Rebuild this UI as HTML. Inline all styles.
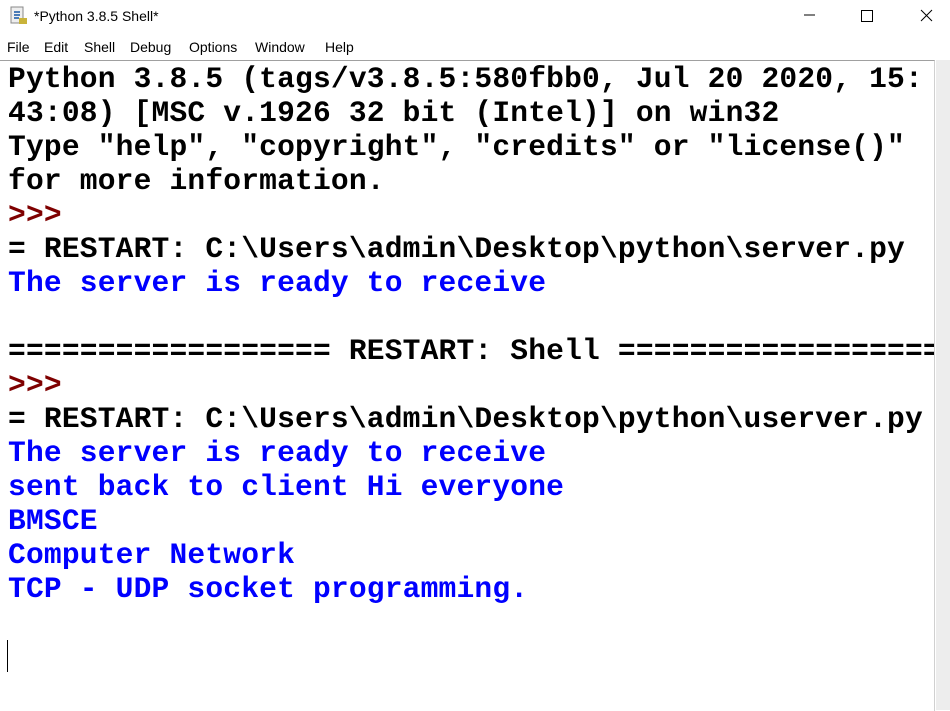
<!DOCTYPE html>
<html><head><style>
body{margin:0;width:950px;height:710px;background:#fff;overflow:hidden;position:relative;font-family:"Liberation Sans",sans-serif}
.title{position:absolute;left:34px;top:8px;font-size:14px;color:#000}
.menu span{position:absolute;top:39px;font-size:14px}
.ta{position:absolute;left:0;top:60px;width:934px;height:650px;border-top:1px solid #a0a0a0;border-right:1px solid #d0d0d0}
.sb{position:absolute;left:936px;top:60px;width:14px;height:650px;background:#ededed}
pre{position:absolute;left:8px;top:62px;margin:0;font-family:"Liberation Mono",monospace;font-weight:bold;font-size:29.6px;letter-spacing:0.18px;line-height:34px;color:#000;width:926px;overflow:hidden}
.b{color:#0000ff}.r{color:#7f0000}
.cur{position:absolute;left:7px;top:640px;width:1px;height:32px;background:#000}
</style></head><body>
<svg style="position:absolute;left:10px;top:6px" width="18" height="20"><rect x="1" y="1" width="12" height="16" fill="#eee" stroke="#888"/><path d="M4 6h6M4 9h6M4 12h5" stroke="#4a7bb7" stroke-width="2"/><rect x="9" y="12" width="8" height="6" fill="#c9b33a"/></svg>
<div class="title">*Python 3.8.5 Shell*</div>
<svg style="position:absolute;left:800px;top:8px" width="140" height="18"><path d="M4 7h11" stroke="#000"/><rect x="61.5" y="2.5" width="11" height="11" fill="none" stroke="#000"/><path d="M121 2l11 11M132 2l-11 11" stroke="#000"/></svg>
<div class="menu"><span style="left:7px">File</span><span style="left:44px">Edit</span><span style="left:84px">Shell</span><span style="left:130px">Debug</span><span style="left:189px">Options</span><span style="left:255px">Window</span><span style="left:325px">Help</span></div>
<div class="ta"></div><div class="sb"></div>
<pre>Python 3.8.5 (tags/v3.8.5:580fbb0, Jul 20 2020, 15:
43:08) [MSC v.1926 32 bit (Intel)] on win32
Type "help", "copyright", "credits" or "license()"
for more information.
<span class="r">&gt;&gt;&gt;</span>
= RESTART: C:\Users\admin\Desktop\python\server.py
<span class="b">The server is ready to receive</span>

================== RESTART: Shell ==================
<span class="r">&gt;&gt;&gt;</span>
= RESTART: C:\Users\admin\Desktop\python\userver.py
<span class="b">The server is ready to receive
sent back to client Hi everyone
BMSCE
Computer Network
TCP - UDP socket programming.</span></pre>
<div class="cur"></div>
</body></html>
